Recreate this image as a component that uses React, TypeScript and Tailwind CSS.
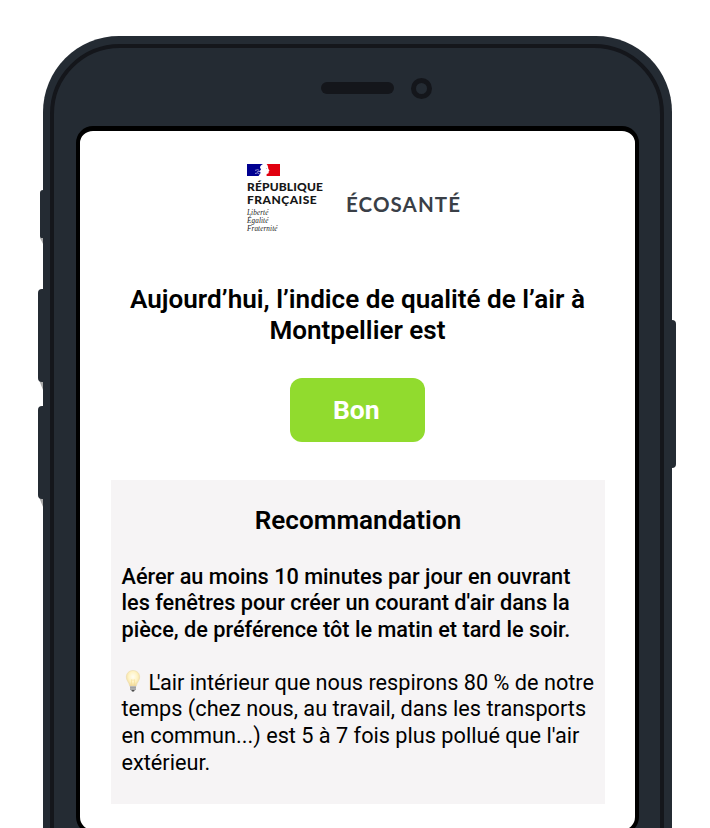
import React from "react";

function Flag() {
  return (
    <svg className="block h-3 w-[33px]" viewBox="0 0 33 12">
      <rect width="33" height="12" fill="#fff" />
      <path d="M0 0h16c-1.800.9-2.900 2.100-3 3.600L14 5.500l-1.600 2 1.400 1.300L11.500 12H0z" fill="#000091" />
      <path d="M19.500 0H33v12H19.700c-.3-1-.2-1.600.3-2.200 1 0 1.600-.3 1.700-1.200l-.1-1.200.9-.6-1.200-2.100-.3-1.700C20.800 1.600 20.300.7 19.500 0z" fill="#e1000f" />
      <path d="M8 6.400l2.600-.7 1.600.6M10 8l2-.7 1.500.7M8 9.500l2.500-.6 2 .9" fill="none" stroke="#c5c5e8" strokeWidth=".7" />
      <circle cx="19.300" cy="4.500" r=".4" fill="#777" />
    </svg>
  );
}

function Bulb() {
  return (
    <svg className="block h-[22px] w-[16px]" viewBox="0 0 16 22">
      <defs>
        <radialGradient id="glow" cx=".5" cy=".4" r=".6">
          <stop offset="0" stopColor="#fffdf2" />
          <stop offset=".55" stopColor="#fff3c4" />
          <stop offset="1" stopColor="#eed79a" />
        </radialGradient>
      </defs>
      <path d="M8 .5C3.900.5 1.300 3.400 1.300 7c0 3.600 2.700 5.200 3.500 9.300h6.400c.8-4.100 3.500-5.700 3.500-9.300C14.700 3.400 12.100.5 8 .5z" fill="url(#glow)" stroke="#ead9a8" strokeWidth=".5" />
      <path d="M6.900 15.500L6.300 9.700l.9.600.8-.6.800.6.900-.6-.6 5.800" fill="none" stroke="#f3d688" strokeWidth=".5" />
      <path d="M5 16h6v3.200l-1.600 2H6.600L5 19.200z" fill="#b9b9b9" />
      <path d="M5 17.600h6M5 19.200h6" stroke="#858585" strokeWidth=".5" />
      <path d="M6.500 20h3l-.6 1.500H7.100z" fill="#4d4d4d" />
    </svg>
  );
}

function Logos() {
  return (
    <div className="flex h-[70px] pl-[167px]">
      <div className="w-[99px] whitespace-nowrap">
        <Flag />
        <div className="mt-[3.500px] font-['Lato',sans-serif] text-[12px] leading-[13px] font-black text-[#161616]">
          <div className="tracking-[0.150px]">RÉPUBLIQUE</div>
          <div className="tracking-[0.500px]">FRANÇAISE</div>
        </div>
        <div className="mt-[3.500px] font-['Liberation_Serif',serif] text-[7.200px] leading-[8px] tracking-[0.100px] text-[#222] italic">
          <div>Liberté</div>
          <div>Égalité</div>
          <div>Fraternité</div>
        </div>
      </div>
      <div className="pt-[27.500px] font-['Lato',sans-serif] text-[20.500px] leading-[24px] font-bold tracking-[1.100px] whitespace-nowrap text-[#3a3f47]">
        ÉCOSANTÉ
      </div>
    </div>
  );
}

export default function App() {
  return (
    <div className="h-[828px] w-[710px] overflow-hidden bg-white pt-[36px] pl-[43px] font-['Roboto',sans-serif] text-black">
      <div className="relative h-[900px] w-[628.500px] rounded-[76px] bg-[#242b33] px-[7px] pt-[8px]">
        <span className="absolute top-[154px] left-[-3px] h-[49px] w-[5px] rounded-l-[3px] bg-[#242b33]" />
        <svg className="absolute top-[344px] left-[-4px] h-[10px] w-[4px]" viewBox="0 0 4 10"><path d="M0 0h4v10z" fill="#aaa" /></svg>
        <svg className="absolute top-[461px] left-[-4px] h-[10px] w-[4px]" viewBox="0 0 4 10"><path d="M0 0h4v10z" fill="#aaa" /></svg>
        <svg className="absolute top-[202px] left-[-3px] h-[6px] w-[3px]" viewBox="0 0 3 6"><path d="M0 0h3v6z" fill="#aaa" /></svg>
        <span className="absolute top-[253px] left-[-5px] h-[93px] w-[7px] rounded-l-[4px] bg-[#242b33]" />
        <span className="absolute top-[370px] left-[-5px] h-[93px] w-[7px] rounded-l-[4px] bg-[#242b33]" />
        <span className="absolute top-[284px] right-[-4.500px] h-[148px] w-[7px] rounded-r-[4px] bg-[#242b33]" />

        <div className="relative h-[880px] w-[614px] rounded-[70px] border-[4px] border-[#14161b] pl-[22px]">
          <div className="flex h-[78px] items-center pt-[2px] pl-[245px]">
            <span className="h-[12px] w-[73px] rounded-full bg-[#14161b]" />
            <span className="ml-[17px] size-[21px] rounded-full border-[5px] border-[#14161b]" />
          </div>

          <main className="h-[708px] w-[563px] rounded-[17px] border-[4px] border-t-[5px] border-black bg-white pt-[33px]">
            <Logos />
            <h1 className="mt-[50px] text-center text-[26.100px] leading-[31px] font-semibold whitespace-nowrap">
              Aujourd’hui, l’indice de qualité de l’air à<br />Montpellier est
            </h1>
            <div className="mt-[32px] ml-[210px] flex h-[63.500px] w-[134.500px] items-center justify-center rounded-[12px] bg-[#91db2e] pt-px pr-[2px] text-[26.500px] leading-none font-bold text-white">
              Bon
            </div>
            <section className="mt-[38.500px] ml-[31px] h-[324px] w-[494px] bg-[#f6f4f5] pt-[24.500px] pl-[10.500px]">
              <h2 className="w-[473px] text-center text-[26.100px] leading-[31px] font-semibold">Recommandation</h2>
              <p className="mt-[28px] text-[21.700px] leading-[26.600px] font-medium whitespace-nowrap">
                Aérer au moins 10 minutes par jour en ouvrant<br />
                les fenêtres pour créer un courant d'air dans la<br />
                pièce, de préférence tôt le matin et tard le soir.
              </p>
              <div className="mt-[26.600px] text-[21.700px] leading-[26.600px] whitespace-nowrap">
                <div className="flex">
                  <span className="w-[27px] pl-[3px]"><Bulb /></span>
                  <span><span className="tracking-[-3.500px]">L</span>'air intérieur que nous respirons 80 % de notre</span>
                </div>
                <div>temps (chez nous, au travail, dans les transports</div>
                <div>en commun...) est 5 à 7 fois plus pollué que l'air</div>
                <div>extérieur.</div>
              </div>
            </section>
          </main>
        </div>
      </div>
    </div>
  );
}
